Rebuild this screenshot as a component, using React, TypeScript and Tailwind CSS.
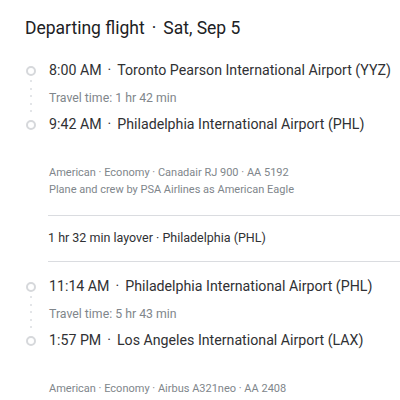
const legs = [
  {
    dep: { time: '8:00 AM', airport: 'Toronto Pearson International Airport (YYZ)' },
    arr: { time: '9:42 AM', airport: 'Philadelphia International Airport (PHL)' },
    travel: 'Travel time: 1 hr 42 min',
    details: ['American · Economy · Canadair RJ 900 · AA 5192', 'Plane and crew by PSA Airlines as American Eagle'],
  },
  {
    dep: { time: '11:14 AM', airport: 'Philadelphia International Airport (PHL)' },
    arr: { time: '1:57 PM', airport: 'Los Angeles International Airport (LAX)' },
    travel: 'Travel time: 5 hr 43 min',
    details: ['American · Economy · Airbus A321neo · AA 2408'],
  },
];

function Circle() {
  return <div className="w-[10px] h-[10px] rounded-full border-[2px] border-[#d6d8db] bg-white" />;
}

function Leg({ leg }: { leg: (typeof legs)[number] }) {
  return (
    <div className="flex">
      {/* timeline */}
      <div className="w-[49px] flex flex-col items-center pl-[12px] pt-[7px]">
        <Circle />
        <div className="flex flex-col gap-[5.5px] mt-[4px] mb-[8px]">
          {[0, 1, 2, 3, 4].map((i) => (
            <div key={i} className="w-[2px] h-[2px] rounded-full bg-[#dadce0]" />
          ))}
        </div>
        <Circle />
      </div>
      <div className="flex-1 min-w-0">
        <div className="h-[24px] flex items-center text-[14.2px] text-[#303134] whitespace-nowrap">
          {leg.dep.time}
          <span className="mx-[6px]">·</span>
          {leg.dep.airport}
        </div>
        <div className="h-[30px] flex items-center text-[12.3px] text-[#80868b]">{leg.travel}</div>
        <div className="h-[24px] flex items-center text-[14.2px] text-[#303134] whitespace-nowrap">
          {leg.arr.time}
          <span className="mx-[6px]">·</span>
          {leg.arr.airport}
        </div>
        <div className="pt-[27px] text-[11px] leading-[17px] text-[#80868b]">
          {leg.details.map((d) => (
            <div key={d}>{d}</div>
          ))}
        </div>
      </div>
    </div>
  );
}

export default function App() {
  return (
    <div className="w-[400px] h-[400px] bg-white overflow-hidden font-['Roboto',sans-serif]">
      <div className="pl-[25px] pt-[17px] text-[17.5px] leading-[22px] text-[#202124]">
        Departing flight<span className="mx-[7px]">·</span>Sat, Sep 5
      </div>
      <div className="mt-[20px]">
        <Leg leg={legs[0]} />
      </div>
      <div className="ml-[48px] mt-[17px] border-t border-[#dadce0] border-b h-[47px] flex items-center text-[12.5px] text-[#303134]">
        1 hr 32 min layover · Philadelphia (PHL)
      </div>
      <div className="mt-[13px]">
        <Leg leg={legs[1]} />
      </div>
    </div>
  );
}
